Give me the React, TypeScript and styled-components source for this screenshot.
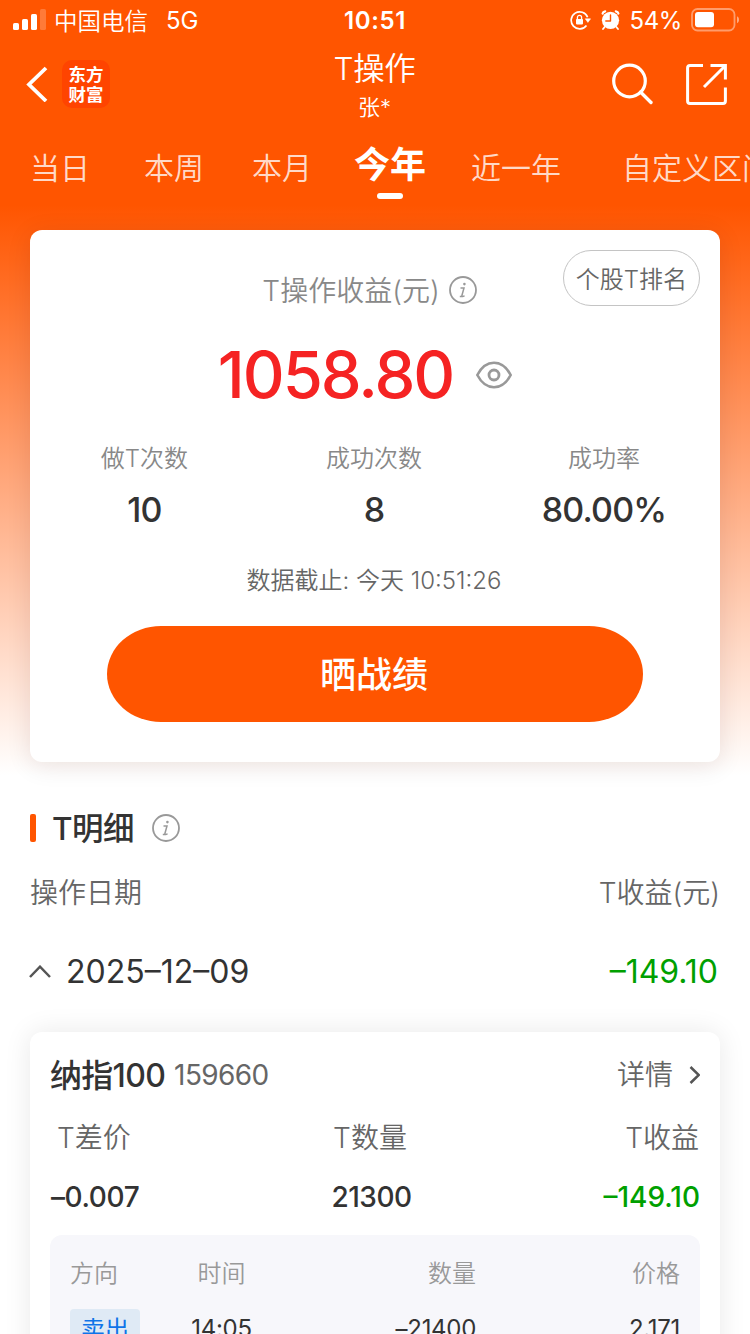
import React from 'react';
import styled, { createGlobalStyle } from 'styled-components';

const ORANGE = '#ff5500';

const GlobalStyle = createGlobalStyle`
  * { box-sizing: border-box; }
  html, body { margin: 0; padding: 0; background: #fff; }
  body {
    width: 750px;
    height: 1334px;
    overflow: hidden;
    font-family: Inter, 'Noto Sans CJK SC', sans-serif;
    color: #333;
  }
  svg { display: block; flex: none; }
`;

const Screen = styled.div`
  width: 750px;
  height: 1334px;
  overflow: hidden;
  display: flex;
  flex-direction: column;
  background: linear-gradient(180deg, ${ORANGE} 0, ${ORANGE} 205px, #fff 775px);
`;

interface TextProps {
  $size: number;
  $color?: string;
  $weight?: number;
  $track?: number;
}

const Text = styled.span<TextProps>`
  font-size: ${(p) => p.$size}px;
  line-height: 1.2;
  font-weight: ${(p) => p.$weight ?? 350};
  letter-spacing: ${(p) => p.$track ?? 0}px;
  color: ${(p) => p.$color ?? '#333'};
  white-space: nowrap;
`;

/* ---------- status bar ---------- */

const StatusBar = styled.div`
  flex: none;
  height: 40px;
  display: grid;
  grid-template-columns: 1fr auto 1fr;
  align-items: center;
  padding: 0 11px 0 13px;
`;

const StatusGroup = styled.div<{ $end?: boolean }>`
  display: flex;
  align-items: center;
  justify-content: ${(p) => (p.$end ? 'flex-end' : 'flex-start')};
`;

const Carrier = styled(Text)`
  margin: 4px 18px 0 8px;
`;

const Network = styled(Text)`
  margin-top: 3px;
`;

const Clock = styled(Text)`
  margin: 2px 2px 0 0;
`;

const Percent = styled(Text)`
  margin: 3px 9px 0 10px;
`;

const AlarmSlot = styled.span`
  margin-left: 10px;
`;

const SignalIcon = () => (
  <svg width="33" height="22" viewBox="0 0 33 22" fill="#fff">
    <rect x="0" y="14" width="6" height="7" rx="1.6" />
    <rect x="9" y="10" width="6" height="11" rx="1.6" />
    <rect x="18" y="5" width="6" height="16" rx="1.6" />
    <rect x="27" y="0" width="6" height="21" rx="1.6" opacity="0.22" />
  </svg>
);

const RotationLockIcon = () => (
  <svg width="21" height="20" viewBox="0 0 21 20" fill="none" stroke="#fff">
    <path d="M17.600 7.200A8.500 8.500 0 1 0 16.500 15.400" strokeWidth="1.700" />
    <path d="M15.200 8.800h5.400l-2.700 3.600z" fill="#fff" strokeWidth="0.500" strokeLinejoin="round" />
    <rect x="6" y="9" width="7" height="5.400" rx="0.800" fill="#fff" stroke="none" />
    <path d="M7.400 9.200V7.400a2.100 2.100 0 0 1 4.200 0v1.800" strokeWidth="1.300" />
  </svg>
);

const AlarmIcon = () => (
  <svg width="19" height="20" viewBox="0 0 19 20" fill="none">
    <circle cx="9.500" cy="10.300" r="8.600" fill="#fff" />
    <path d="M1.600 3.600Q2 1.700 4.200 1.300M17.400 3.600Q17 1.700 14.800 1.300" stroke="#fff" strokeWidth="2.200" strokeLinecap="round" />
    <path d="M3.600 17l-1.600 2M15.400 17l1.600 2" stroke="#fff" strokeWidth="1.800" strokeLinecap="round" />
    <path d="M9.500 5v6H4.800" stroke={ORANGE} strokeWidth="1.400" strokeLinecap="round" strokeLinejoin="round" />
  </svg>
);

const BatteryIcon = () => (
  <svg width="48" height="24" viewBox="0 0 48 24" fill="none">
    <rect x="1" y="1" width="42.500" height="21.500" rx="5.500" stroke="#fff" strokeOpacity="0.420" strokeWidth="1.800" />
    <rect x="4" y="4" width="19" height="15.300" rx="3" fill="#fff" />
    <path d="M46 8.300c1.600.8 2 2.200 2 3.400s-.4 2.700-2 3.500z" fill="#fff" opacity="0.500" />
  </svg>
);

/* ---------- navigation ---------- */

const NavBar = styled.header`
  flex: none;
  height: 88px;
  display: grid;
  grid-template-columns: 1fr auto 1fr;
  padding: 0 23px 0 26px;
`;

const NavSide = styled.div<{ $end?: boolean }>`
  display: flex;
  align-items: center;
  justify-content: ${(p) => (p.$end ? 'flex-end' : 'flex-start')};
  gap: ${(p) => (p.$end ? 32 : 14)}px;
`;

const NavTitle = styled.div`
  display: flex;
  flex-direction: column;
  align-items: center;
  padding: 10px 4px 0 0;
  gap: 6px;
`;

const Logo = styled.div`
  width: 48px;
  height: 48px;
  border-radius: 10px;
  background: #ff4400;
  color: #fff;
  font: 700 17.5px/20px 'Noto Sans CJK SC', sans-serif;
  display: flex;
  flex-direction: column;
  align-items: center;
  justify-content: center;
`;

const BackIcon = () => (
  <svg width="22" height="36" viewBox="0 0 22 36" fill="none" stroke="#fff" strokeWidth="3.800">
    <path d="M20 2L3 18.500l17 16.500" />
  </svg>
);

const SearchIcon = () => (
  <svg width="42" height="42" viewBox="0 0 42 42" fill="none" stroke="#fff" strokeWidth="3.200">
    <circle cx="17.500" cy="18" r="15.800" />
    <path d="M28.500 29L39 39.500" strokeLinecap="round" strokeWidth="3.400" />
  </svg>
);

const ShareIcon = () => (
  <svg width="41" height="41" viewBox="0 0 41 41" fill="none" stroke="#fff" strokeWidth="3">
    <path d="M17 1.600H4Q1.600 1.600 1.600 4V37Q1.600 39.400 4 39.400H37Q39.400 39.400 39.400 37V23.500" />
    <path d="M24.500 1.600H39.400V15.500M38.500 2.500L18 23" />
  </svg>
);

/* ---------- period tabs ---------- */

const Tabs = styled.nav`
  flex: none;
  height: 102px;
  width: 750px;
  display: flex;
  align-items: flex-start;
  overflow: hidden;
`;

const Tab = styled.div<{ $before: number; $active?: boolean }>`
  flex: none;
  margin-left: ${(p) => p.$before}px;
  padding-top: ${(p) => (p.$active ? 15 : 21)}px;
  display: flex;
  flex-direction: column;
  align-items: center;
  gap: 6px;
  font-size: ${(p) => (p.$active ? 36 : 30)}px;
  line-height: ${(p) => (p.$active ? 44 : 38)}px;
  font-weight: ${(p) => (p.$active ? 700 : 350)};
  color: ${(p) => (p.$active ? '#fff' : 'rgba(255, 255, 255, 0.8)')};
  white-space: nowrap;
`;

const TabMark = styled.i`
  width: 26px;
  height: 6px;
  border-radius: 3px;
  background: #fff;
`;

/* ---------- summary card ---------- */

const SummaryCard = styled.section`
  flex: none;
  position: relative;
  margin: 0 30px;
  height: 532px;
  border-radius: 12px;
  background: #fff;
  box-shadow: 0 4px 24px rgba(60, 20, 0, 0.11);
  display: flex;
  flex-direction: column;
  align-items: center;
`;

const RankButton = styled.button`
  position: absolute;
  top: 20px;
  right: 20px;
  width: 137px;
  height: 56px;
  padding: 3px 0 0;
  border: 1px solid #c4c4c4;
  border-radius: 28px;
  background: #fff;
  font: 350 24px/52px Inter, 'Noto Sans CJK SC', sans-serif;
  color: #666;
  white-space: nowrap;
`;

const CardCaption = styled.div`
  display: flex;
  align-items: center;
  gap: 9px;
  margin-top: 43px;
  height: 34px;
  padding-right: 11px;

  & > span { padding-top: 4px; }
`;

const ProfitRow = styled.div`
  display: flex;
  align-items: center;
  gap: 23px;
  margin-top: 22px;
  height: 92px;
  padding-right: 20px;
`;

const StatGrid = styled.div`
  width: 690px;
  display: grid;
  grid-template-columns: 229px 230px 230px;
  margin-top: 24px;
`;

const Stat = styled.div`
  display: flex;
  flex-direction: column;
  align-items: center;
  gap: 16px;
`;

const AsOf = styled.div`
  margin-top: 35px;
  height: 32px;
  display: flex;
  align-items: center;
  padding-right: 2px;
`;

const ShareButton = styled.button`
  margin-top: 28px;
  width: 536px;
  height: 96px;
  padding: 3px 2px 0 0;
  border: 0;
  border-radius: 54px / 48px;
  background: ${ORANGE};
  color: #fff;
  font: 500 36px/93px Inter, 'Noto Sans CJK SC', sans-serif;
`;

const InfoIcon = () => (
  <svg width="28" height="28" viewBox="0 0 28 28" fill="none" stroke="#999">
    <circle cx="14" cy="14" r="13" strokeWidth="1.800" />
    <path d="M11.500 11.900h3.500l-2.100 7.600q-.2 1 .9.900l1.800-.5M10.800 20.400h2.500" strokeWidth="1.500" />
    <circle cx="15.400" cy="8.100" r="1.300" fill="#999" stroke="none" />
  </svg>
);

const EyeIcon = () => (
  <svg width="36" height="28" viewBox="0 0 36 28" fill="none" stroke="#999" strokeWidth="2.600">
    <path d="M1.300 14C5.500 6 11.500 1.800 18 1.800S30.500 6 34.700 14C30.500 22 24.500 26.200 18 26.200S5.500 22 1.300 14z" strokeLinejoin="round" />
    <circle cx="18" cy="14" r="5" strokeWidth="2.800" />
  </svg>
);

/* ---------- detail section ---------- */

const SectionTitle = styled.div`
  flex: none;
  display: flex;
  align-items: center;
  height: 44px;
  margin: 44px 30px 0;
`;

const TitleBar = styled.i`
  width: 6px;
  height: 28px;
  border-radius: 2px;
  background: ${ORANGE};
  margin-right: 16px;
`;

const TitleText = styled(Text)`
  margin-right: 18px;
  padding-top: 2px;
`;

const SplitRow = styled.div<{ $height: number; $top?: number; $inset?: number }>`
  flex: none;
  display: flex;
  align-items: center;
  justify-content: space-between;
  height: ${(p) => p.$height}px;
  margin: ${(p) => p.$top ?? 0}px ${(p) => p.$inset ?? 30}px 0;
`;

const DateRow = styled(SplitRow)`
  padding-right: 2px;
  margin-left: 29px;
`;

const Inline = styled.div<{ $gap: number }>`
  display: flex;
  align-items: center;
  gap: ${(p) => p.$gap}px;
`;

const CardHead = styled(SplitRow)`
  & ${Text} { padding-top: 2px; }
`;

const CollapseIcon = () => (
  <svg width="22" height="14" viewBox="0 0 22 14" fill="none" stroke="#555" strokeWidth="2.500">
    <path d="M1 12L11 1.700L21 12" />
  </svg>
);

const ChevronIcon = () => (
  <svg width="12" height="18" viewBox="0 0 12 18" fill="none" stroke="#555" strokeWidth="2.500">
    <path d="M2.500 1L10.800 9L2.500 17" />
  </svg>
);

const StockCard = styled.section`
  flex: none;
  margin: 20px 30px 0;
  height: 420px;
  border-radius: 12px;
  background: #fff;
  box-shadow: 0 0 28px rgba(0, 0, 0, 0.09);
  padding: 21px 20px 0;
`;

const Metrics = styled.div<{ $height: number; $head?: boolean }>`
  display: grid;
  grid-template-columns: 1fr auto 1fr;
  align-items: center;
  height: ${(p) => p.$height}px;
  padding: ${(p) => (p.$head ? '2px 1px 0 7px' : '1px 0 0 1px')};
  & > :nth-child(2) { margin-right: ${(p) => (p.$head ? 16 : 8)}px; }
  & > :nth-child(3) { text-align: right; }
`;

const Trades = styled.div`
  margin-top: 20px;
  height: 170px;
  border-radius: 12px;
  background: #f7f7fb;
  padding: 19px 20px 0;
`;

const TradeRow = styled.div<{ $height: number }>`
  display: grid;
  grid-template-columns: 102px 99px 205px 204px;
  align-items: center;
  height: ${(p) => p.$height}px;
  & > :nth-child(2) { text-align: center; }
  & > :nth-child(n + 3) { text-align: right; }
`;

const SellTag = styled.span`
  width: 70px;
  height: 40px;
  border-radius: 4px;
  background: #dfeaf5;
  color: #0f74e8;
  font-size: 24px;
  line-height: 42px;
  text-align: center;
`;

const tabs = [
  { label: '当日', before: 30 },
  { label: '本周', before: 54 },
  { label: '本月', before: 48 },
  { label: '今年', before: 42, active: true },
  { label: '近一年', before: 45 },
  { label: '自定义区间', before: 61 },
];

const stats = [
  { label: '做T次数', value: '10' },
  { label: '成功次数', value: '8' },
  { label: '成功率', value: '80.00%' },
];

export default function App() {
  return (
    <>
      <GlobalStyle />
      <Screen>
        <StatusBar>
          <StatusGroup>
            <SignalIcon />
            <Carrier $size={23.5} $color="#fff">中国电信</Carrier>
            <Network $size={24} $weight={400} $color="#fff">5G</Network>
          </StatusGroup>
          <Clock $size={24} $weight={600} $track={0.6} $color="#fff">10:51</Clock>
          <StatusGroup $end>
            <RotationLockIcon />
            <AlarmSlot><AlarmIcon /></AlarmSlot>
            <Percent $size={24} $weight={400} $track={-0.4} $color="#fff">54%</Percent>
            <BatteryIcon />
          </StatusGroup>
        </StatusBar>

        <NavBar>
          <NavSide>
            <BackIcon />
            <Logo>
              <span>东方</span>
              <span>财富</span>
            </Logo>
          </NavSide>
          <NavTitle>
            <Text $size={31.5} $track={-0.3} $color="#fff">T操作</Text>
            <Text $size={22} $color="#fff">张*</Text>
          </NavTitle>
          <NavSide $end>
            <SearchIcon />
            <ShareIcon />
          </NavSide>
        </NavBar>

        <Tabs>
          {tabs.map((t) => (
            <Tab key={t.label} $before={t.before} $active={t.active}>
              {t.label}
              {t.active && <TabMark />}
            </Tab>
          ))}
        </Tabs>

        <SummaryCard>
          <RankButton>个股T排名</RankButton>
          <CardCaption>
            <Text $size={28} $color="#888">T操作收益(元)</Text>
            <InfoIcon />
          </CardCaption>
          <ProfitRow>
            <Text $size={65} $weight={500} $track={-2} $color="#f52323">1058.80</Text>
            <EyeIcon />
          </ProfitRow>
          <StatGrid>
            {stats.map((s) => (
              <Stat key={s.label}>
                <Text $size={24} $color="#888">{s.label}</Text>
                <Text $size={34} $weight={500} $track={-0.8}>{s.value}</Text>
              </Stat>
            ))}
          </StatGrid>
          <AsOf>
            <Text $size={24} $color="#666">数据截止: 今天 10:51:26</Text>
          </AsOf>
          <ShareButton>晒战绩</ShareButton>
        </SummaryCard>

        <SectionTitle>
          <TitleBar />
          <TitleText $size={31.5} $weight={500} $track={-0.5}>T明细</TitleText>
          <InfoIcon />
        </SectionTitle>
        <SplitRow $height={44} $top={22}>
          <Text $size={28} $color="#666">操作日期</Text>
          <Text $size={28} $color="#666">T收益(元)</Text>
        </SplitRow>
        <DateRow $height={80} $top={16}>
          <Inline $gap={15}>
            <CollapseIcon />
            <Text $size={32} $weight={400}>2025–12–09</Text>
          </Inline>
          <Text $size={32} $weight={400} $color="#00a000">–149.10</Text>
        </DateRow>

        <StockCard>
          <CardHead $height={44} $inset={0}>
            <Inline $gap={9}>
              <Text $size={32} $weight={500} $track={-0.7}>纳指100</Text>
              <Text $size={28} $weight={400} $track={-0.6} $color="#666">159660</Text>
            </Inline>
            <Inline $gap={15}>
              <Text $size={28} $color="#666">详情</Text>
              <ChevronIcon />
            </Inline>
          </CardHead>
          <Metrics $height={82} $head>
            <Text $size={28} $color="#666">T差价</Text>
            <Text $size={28} $color="#666">T数量</Text>
            <Text $size={28} $color="#666">T收益</Text>
          </Metrics>
          <Metrics $height={36}>
            <Text $size={28} $weight={500} $track={-0.4}>–0.007</Text>
            <Text $size={28} $weight={500} $track={-0.5}>21300</Text>
            <Text $size={28} $weight={500} $color="#00a000">–149.10</Text>
          </Metrics>
          <Trades>
            <TradeRow $height={40}>
              <Text $size={24} $color="#999">方向</Text>
              <Text $size={24} $color="#999">时间</Text>
              <Text $size={24} $color="#999">数量</Text>
              <Text $size={24} $color="#999">价格</Text>
            </TradeRow>
            <TradeRow $height={70}>
              <SellTag>卖出</SellTag>
              <Text $size={24} $weight={400} $track={-0.3}>14:05</Text>
              <Text $size={24} $weight={400} $track={-0.3}>–21400</Text>
              <Text $size={24} $weight={400} $track={-0.3}>2.171</Text>
            </TradeRow>
          </Trades>
        </StockCard>
      </Screen>
    </>
  );
}
